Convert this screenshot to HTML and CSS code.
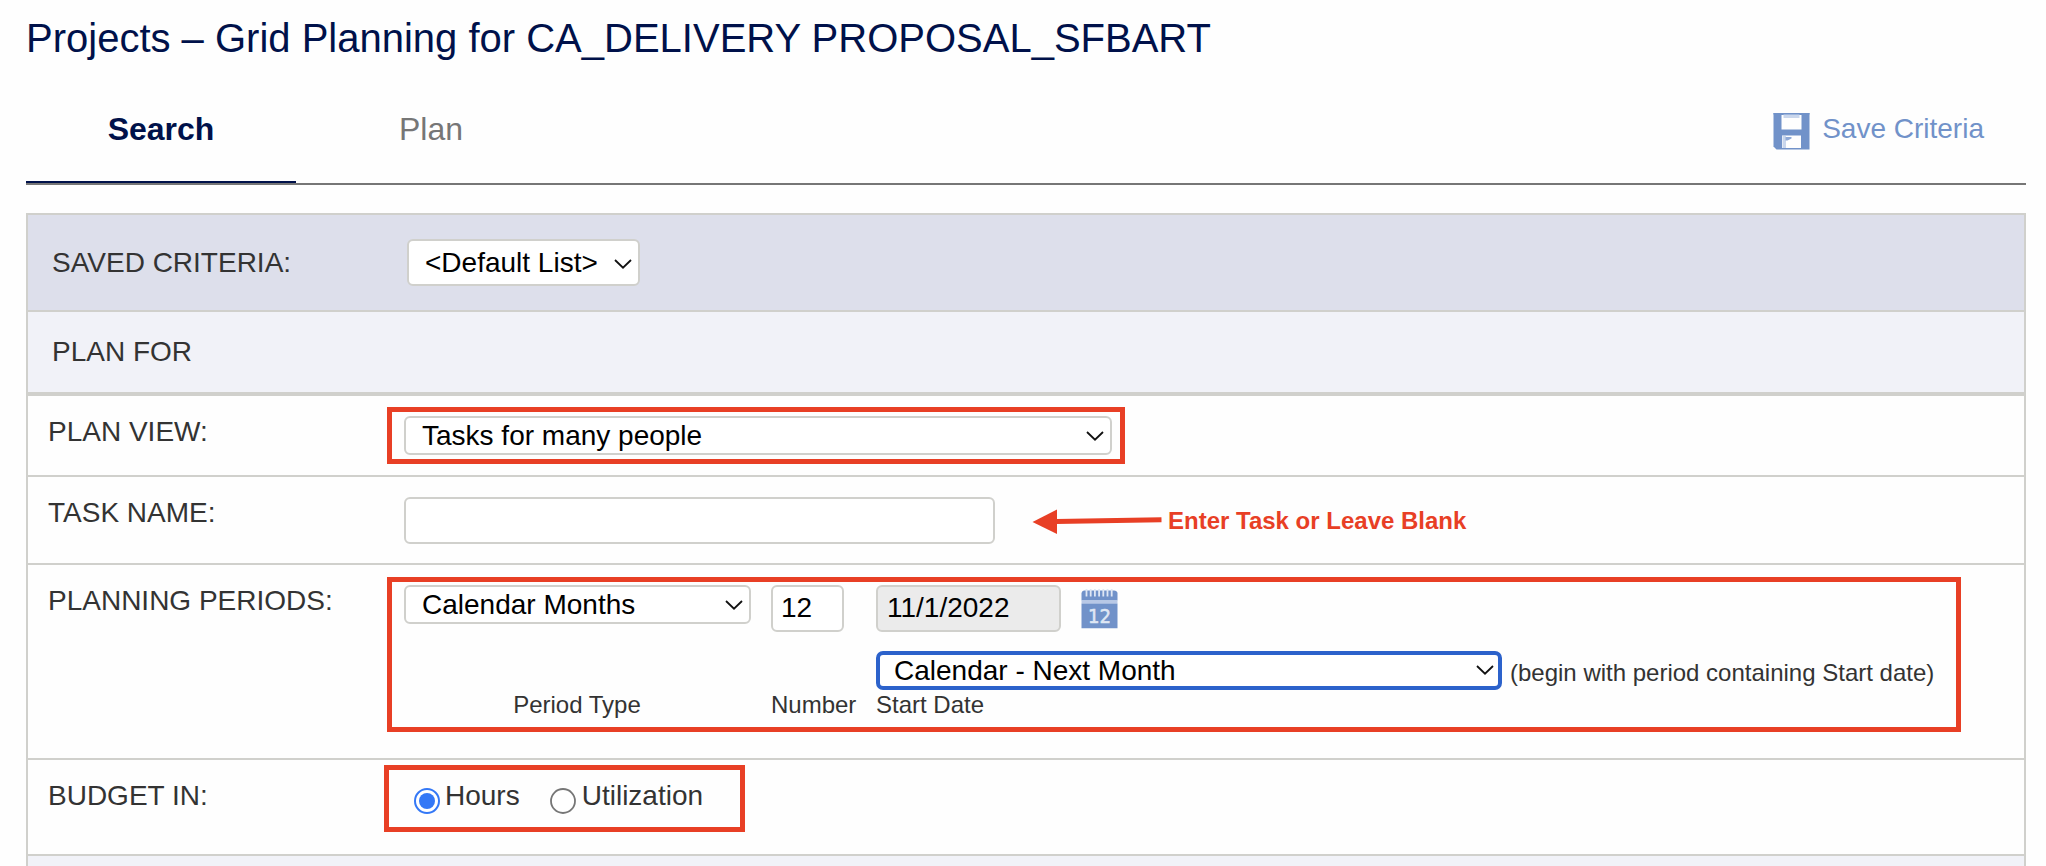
FILE: index.html
```html
<!DOCTYPE html>
<html lang="en">
<head>
<meta charset="utf-8">
<title>Projects – Grid Planning</title>
<link rel="stylesheet" href="styles.css">
</head>
<body>
<svg class="defs" width="0" height="0" aria-hidden="true">
  <symbol id="chevron" viewBox="0 0 18 10"><path d="M1 1L9 8.7L17 1" fill="none" stroke="#111" stroke-width="1.8"/></symbol>
</svg>
<main class="page">
  <h1 class="title">Projects – Grid Planning for CA_DELIVERY PROPOSAL_SFBART</h1>
  <nav class="tabs">
    <a class="tab tab-active">Search</a>
    <a class="tab">Plan</a>
    <a class="save">
      <svg class="save-icon" width="37" height="38" viewBox="0 0 37 38">
        <path d="M0.5 1H36.5V37.5H3.5L0.5 34.5Z" fill="#7192c9"/>
        <path d="M8.5 3H28.5V17.5H8.5Z" fill="#fefefe"/>
        <path d="M10.5 2H26.5V6H10.5Z" fill="#c9d6ec"/>
        <path d="M0.5 1.7H36.5" stroke="#7192c9" stroke-width="1.4"/>
        <path d="M9 23.5H28V36H9Z" fill="#fefefe"/>
        <path d="M9.5 24H13V36H9.5Z" fill="#c9d6ec"/>
        <path d="M12.5 25H18.5V26.5L14.5 28.5H12.5Z" fill="#8fa9d6"/>
      </svg>
      <span class="save-text">Save Criteria</span>
    </a>
  </nav>
  <section class="panel">
    <div class="row row-saved">
      <span class="label">SAVED CRITERIA:</span>
      <div class="field select select-saved"><span>&lt;Default List&gt;</span><svg class="chev" width="18" height="10"><use href="#chevron"/></svg></div>
    </div>
    <div class="row row-planfor"><span class="label">PLAN FOR</span></div>
    <div class="row row-view">
      <span class="label">PLAN VIEW:</span>
      <div class="field select select-view"><span>Tasks for many people</span><svg class="chev" width="18" height="10"><use href="#chevron"/></svg></div>
      <div class="mark mark-view"></div>
    </div>
    <div class="row row-task">
      <span class="label">TASK NAME:</span>
      <div class="field task-input"></div>
      <svg class="arrow" width="132" height="26" viewBox="0 0 132 26">
        <path d="M0.5 13L25 0.5V25Z" fill="#e83f25"/>
        <path d="M24 12.6L129.5 10.7" stroke="#e83f25" stroke-width="5"/>
      </svg>
      <span class="hint">Enter Task or Leave Blank</span>
    </div>
    <div class="row row-periods">
      <span class="label">PLANNING PERIODS:</span>
      <div class="periods">
        <div class="col col-type">
          <div class="field select select-type"><span>Calendar Months</span><svg class="chev" width="18" height="10"><use href="#chevron"/></svg></div>
          <span class="caption caption-center">Period Type</span>
        </div>
        <div class="col col-number">
          <div class="field input num">12</div>
          <span class="caption">Number</span>
        </div>
        <div class="col col-start">
          <div class="line">
            <div class="field input date">11/1/2022</div>
            <svg class="cal" width="37" height="41" viewBox="0 0 37 41">
              <path d="M0.5 5Q1 2.5 3 2.5H33Q36 2.5 36.5 5V12.5H0.5Z" fill="#7192c9"/>
              <path d="M0.5 12.5H36.5V15.5H0.5Z" fill="#b8c8e6"/>
              <path d="M0.5 15.5H36.5V40.2H0.5Z" fill="#7192c9"/>
              <path d="M5.5 1V8.5M9.7 1V8.5M13.9 1V8.5M18.1 1V8.5M22.3 1V8.5M26.5 1V8.5M30.7 1V8.5" stroke="#dfe7f4" stroke-width="1.8"/>
              <text x="7" y="34.5" class="cal-text" textLength="23" lengthAdjust="spacingAndGlyphs">12</text>
            </svg>
          </div>
          <div class="line line-next">
            <div class="field select select-next"><span>Calendar - Next Month</span><svg class="chev" width="18" height="10"><use href="#chevron"/></svg></div>
            <span class="note">(begin with period containing Start date)</span>
          </div>
          <span class="caption">Start Date</span>
        </div>
      </div>
      <div class="mark mark-periods"></div>
    </div>
    <div class="row row-budget">
      <span class="label">BUDGET IN:</span>
      <div class="radios">
        <svg class="radio" width="28" height="28" viewBox="0 0 28 28"><circle cx="14" cy="14" r="12" fill="#fff" stroke="#3478f6" stroke-width="2"/><circle cx="14" cy="14" r="8" fill="#3478f6"/></svg>
        <span class="radio-text hours">Hours</span>
        <svg class="radio radio-off" width="28" height="28" viewBox="0 0 28 28"><circle cx="14" cy="14" r="12" fill="#fff" stroke="#767676" stroke-width="1.8"/></svg>
        <span class="radio-text">Utilization</span>
      </div>
      <div class="mark mark-budget"></div>
    </div>
    <div class="row-next"></div>
  </section>
</main>
</body>
</html>
```
FILE: styles.css
```css
* { box-sizing: border-box; }
body {
  margin: 0;
  height: 866px;
  overflow: hidden;
  background: #fefefe;
  color: #333;
  font: 28px/32px "Liberation Sans", Arial, sans-serif;
  white-space: nowrap;
}
svg { display: block; flex: none; }
.defs { position: absolute; }
.page { width: 2026px; padding: 15px 0 0 26px; }
.title {
  margin: 0;
  color: #00114a;
  font-size: 40px;
  line-height: 46px;
  font-weight: 400;
}
.tabs {
  display: flex;
  height: 124px;
  border-bottom: 2px solid #767676;
}
.tab {
  width: 270px;
  padding-top: 50px;
  color: #767676;
  font-size: 32px;
  line-height: 36px;
  text-align: center;
}
.tab-active {
  color: #00114a;
  font-weight: 700;
  border-bottom: 2px solid #00114a;
}
.save {
  display: flex;
  gap: 12px;
  margin-left: auto;
  padding: 51px 42px 0 0;
  color: #7192c9;
}
.save-text { padding-top: 1px; }
.panel {
  height: 653px;
  margin-top: 28px;
  border: 2px solid #d0d0cc;
  border-bottom: 0;
}
.row {
  position: relative;
  display: flex;
  border-bottom: 2px solid #d0d0cc;
}
.label { flex: none; width: 355px; padding: 1px 0 0 20px; }
.field {
  flex: none;
  background: #fff;
  border: 2px solid #d0d0cc;
  border-radius: 6px;
  color: #000;
}
.select { display: flex; justify-content: space-between; padding: 2px 0 0 16px; }
.chev { margin: 11px 6px 0 0; }

.row-saved { height: 97px; padding-top: 24px; background: #dddfeb; }
.row-saved .label { width: 379px; padding: 8px 0 0 24px; }
.select-saved { width: 233px; height: 47px; padding-top: 6px; }
.select-saved .chev { margin-top: 12px; }
.row-planfor { height: 84px; padding-top: 23px; border-bottom-width: 4px; background: #f1f2f8; }
.row-planfor .label { padding-left: 24px; }

.row-view { height: 81px; padding-top: 19px; }
.row-view .field { width: 708px; height: 39px; margin: 1px 0 0 21px; }
.row-task { height: 88px; padding-top: 19px; }
.task-input { width: 591px; height: 47px; margin: 1px 0 0 21px; }
.arrow { margin: 13px 0 0 37px; }
.hint {
  margin: 11px 0 0 4px;
  color: #e83f25;
  font-size: 24px;
  line-height: 28px;
  font-weight: 700;
}

.row-periods { height: 195px; padding-top: 20px; }
.row-periods .label { padding-top: 0; }
.periods { display: flex; margin-left: 21px; }
.col { display: flex; flex-direction: column; height: 153px; }
.col-type { width: 367px; }
.select-type { width: 347px; height: 39px; }
.caption { margin-top: auto; padding-bottom: 19px; font-size: 24px; line-height: 28px; }
.caption-center { width: 346px; text-align: center; }
.col-number { width: 105px; }
.input { height: 47px; padding: 5px 0 0 9px; }
.num { width: 73px; padding-left: 8px; }
.date { width: 185px; background: #ebebeb; }
.line { display: flex; }
.cal { margin: 3px 0 0 20px; }
.cal-text { font: 400 20px "DejaVu Sans", sans-serif; fill: #dfe7f4; stroke: #dfe7f4; stroke-width: 0.6px; }
.line-next { margin-top: 19px; }
.select-next { width: 626px; height: 39px; padding: 0 0 0 14px; border: 4px solid #2c62cb; border-radius: 7px; }
.select-next .chev { margin: 10px 4px 0 0; }
.note { margin: 8px 0 0 8px; font-size: 24px; line-height: 28px; }

.row-budget { height: 96px; padding-top: 19px; }
.radios { display: flex; margin-left: 30px; }
.radio { margin: 8px 4px 0 0; }
.radio-off { margin-right: 5px; }
.radio-text { padding-top: 1px; }
.hours { margin-right: 29px; }

.mark { position: absolute; border: 5px solid #e83f25; }
.mark-view { left: 359px; top: 11px; width: 738px; height: 57px; }
.mark-periods { left: 359px; top: 12px; width: 1574px; height: 155px; }
.mark-budget { left: 356px; top: 5px; width: 361px; height: 67px; }
.row-next { height: 20px; background: #f1f2f8; }
```
